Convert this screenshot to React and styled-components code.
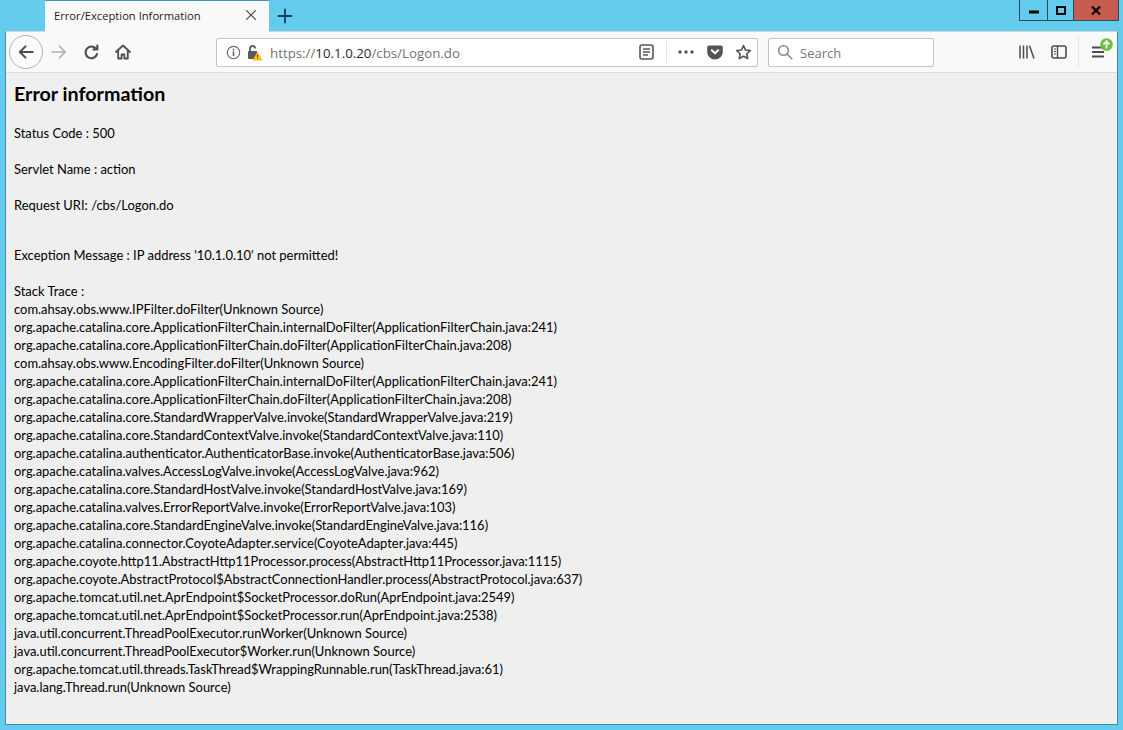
import React from 'react'
import styled, { createGlobalStyle } from 'styled-components'

const GlobalStyle = createGlobalStyle`
  html, body { margin: 0; padding: 0; background: #63cbec; }
  body { font-family: "Open Sans", "Noto Sans", sans-serif; overflow: hidden; }
`

const Desktop = styled.div`
  width: 1123px;
  height: 730px;
  background: #63cbec;
  display: flex;
  flex-direction: column;
  overflow: hidden;
`

const TitleBar = styled.div`
  height: 31px;
  display: flex;
  align-items: flex-start;
  padding-left: 45px;
  flex: none;
`

const Tab = styled.div`
  width: 224px;
  height: 32px;
  background: #f9f9fa;
  border-top: 1px solid #3d8fc4;
  box-sizing: border-box;
  display: flex;
  align-items: center;
  justify-content: space-between;
  padding: 0 11px 3px 9px;
  font-size: 11.2px;
  color: #222;
  position: relative;
  z-index: 1;
`

const NewTab = styled.div`
  width: 32px;
  height: 31px;
  display: flex;
  align-items: center;
  justify-content: center;
`

const WindowControls = styled.div`
  margin-left: auto;
  margin-right: 4px;
  display: flex;
  width: 100px;
  height: 21px;
  border: 1px solid #2d4a5a;
  border-top: none;
  box-sizing: border-box;
`

const ControlButton = styled.div`
  width: ${({ $w }) => $w}px;
  box-sizing: border-box;
  background: ${({ $close }) => ($close ? '#c75b50' : 'transparent')};
  border-left: ${({ $first }) => ($first ? 'none' : '1px solid #2d4a5a')};
  display: flex;
  align-items: center;
  justify-content: center;
`

const Frame = styled.div`
  margin: 0 5px 5px;
  flex: 1;
  min-height: 0;
  border: 1px solid #3a8db5;
  border-top: 1px solid #d6d6d6;
  display: flex;
  flex-direction: column;
  background: #efefef;
`

const Toolbar = styled.div`
  height: 40px;
  flex: none;
  background: #f9f9fa;
  border-bottom: 1px solid #dcdcdc;
  display: flex;
  align-items: center;
  padding-left: 3px;
`

const BackButton = styled.div`
  width: 34px;
  height: 34px;
  border-radius: 50%;
  border: 1px solid #b4b4b4;
  background: #fbfbfb;
  box-sizing: border-box;
  display: flex;
  align-items: center;
  justify-content: center;
  flex: none;
`

const ToolIcon = styled.div`
  width: 32px;
  height: 32px;
  display: flex;
  align-items: center;
  justify-content: center;
  flex: none;
`

const UrlBar = styled.div`
  margin-left: 77px;
  width: 542px;
  height: 29px;
  box-sizing: border-box;
  background: #fff;
  border: 1px solid #c4c4c4;
  border-radius: 2px;
  display: flex;
  align-items: center;
  padding-left: 9px;
  flex: none;
`

const LockIcon = styled.svg`
  margin-left: 6px;
  flex: none;
`

const UrlText = styled.span`
  margin-left: 7px;
  padding-top: 1px;
  font-size: 13.3px;
  color: #737373;
  white-space: nowrap;
`

const UrlHost = styled.span`
  color: #2a2a2a;
`

const UrlActions = styled.div`
  margin-left: auto;
  display: flex;
  align-items: center;
  height: 100%;
`

const UrlAction = styled.div`
  width: ${({ $w }) => $w || 28}px;
  height: 100%;
  display: flex;
  align-items: center;
  justify-content: center;
`

const UrlDivider = styled.div`
  width: 1px;
  height: 22px;
  background: #e2e2e2;
  margin: 0 4px 0 6px;
`

const SearchBar = styled.div`
  margin-left: 10px;
  width: 166px;
  height: 29px;
  box-sizing: border-box;
  background: #fff;
  border: 1px solid #c4c4c4;
  border-radius: 2px;
  display: flex;
  align-items: center;
  padding-left: 8px;
  gap: 7px;
  font-size: 13px;
  color: #777;
  flex: none;
`

const SearchLabel = styled.span`
  padding-top: 1px;
`

const RightTools = styled.div`
  margin-left: 77px;
  display: flex;
  align-items: center;
`

const RightIcon = styled.div`
  position: relative;
  width: 32px;
  height: 32px;
  display: flex;
  align-items: center;
  justify-content: center;
`

const ToolDivider = styled.div`
  width: 1px;
  height: 32px;
  background: #e4e4e4;
  margin: 0 3px 0 3px;
`

const Badge = styled.svg`
  position: absolute;
  top: 2px;
  right: 1px;
`

const Page = styled.main`
  flex: 1;
  min-height: 0;
  padding: 9px 8px 0;
  color: #000;
  font-family: Lato, "Open Sans", sans-serif;
  font-size: 12.95px;
  line-height: 18px;
  overflow: hidden;
`

const Heading = styled.h1`
  margin: 0 0 18px;
  font-size: 19.7px;
  line-height: 24px;
  font-weight: 700;
`

const Field = styled.p`
  margin: ${({ $gap }) => ($gap ? '32px' : '0')} 0 18px;
  white-space: pre;
`

const Trace = styled.div`
  white-space: pre;
`

const stack = [
  'com.ahsay.obs.www.IPFilter.doFilter(Unknown Source)',
  'org.apache.catalina.core.ApplicationFilterChain.internalDoFilter(ApplicationFilterChain.java:241)',
  'org.apache.catalina.core.ApplicationFilterChain.doFilter(ApplicationFilterChain.java:208)',
  'com.ahsay.obs.www.EncodingFilter.doFilter(Unknown Source)',
  'org.apache.catalina.core.ApplicationFilterChain.internalDoFilter(ApplicationFilterChain.java:241)',
  'org.apache.catalina.core.ApplicationFilterChain.doFilter(ApplicationFilterChain.java:208)',
  'org.apache.catalina.core.StandardWrapperValve.invoke(StandardWrapperValve.java:219)',
  'org.apache.catalina.core.StandardContextValve.invoke(StandardContextValve.java:110)',
  'org.apache.catalina.authenticator.AuthenticatorBase.invoke(AuthenticatorBase.java:506)',
  'org.apache.catalina.valves.AccessLogValve.invoke(AccessLogValve.java:962)',
  'org.apache.catalina.core.StandardHostValve.invoke(StandardHostValve.java:169)',
  'org.apache.catalina.valves.ErrorReportValve.invoke(ErrorReportValve.java:103)',
  'org.apache.catalina.core.StandardEngineValve.invoke(StandardEngineValve.java:116)',
  'org.apache.catalina.connector.CoyoteAdapter.service(CoyoteAdapter.java:445)',
  'org.apache.coyote.http11.AbstractHttp11Processor.process(AbstractHttp11Processor.java:1115)',
  'org.apache.coyote.AbstractProtocol$AbstractConnectionHandler.process(AbstractProtocol.java:637)',
  'org.apache.tomcat.util.net.AprEndpoint$SocketProcessor.doRun(AprEndpoint.java:2549)',
  'org.apache.tomcat.util.net.AprEndpoint$SocketProcessor.run(AprEndpoint.java:2538)',
  'java.util.concurrent.ThreadPoolExecutor.runWorker(Unknown Source)',
  'java.util.concurrent.ThreadPoolExecutor$Worker.run(Unknown Source)',
  'org.apache.tomcat.util.threads.TaskThread$WrappingRunnable.run(TaskThread.java:61)',
  'java.lang.Thread.run(Unknown Source)',
]

const Glyph = ({ size = 16, color = '#4d4d4d', width = 1.7, children }) => (
  <svg width={size} height={size} viewBox="0 0 16 16" fill="none" stroke={color} strokeWidth={width} strokeLinecap="round" strokeLinejoin="round">
    {children}
  </svg>
)

function App() {
  return (
    <Desktop>
      <GlobalStyle />
      <TitleBar>
        <Tab>
          <span>Error/Exception Information</span>
          <Glyph size={14} width={1.5}><path d="M3 3l10 10M13 3L3 13" /></Glyph>
        </Tab>
        <NewTab>
          <Glyph size={16} color="#123f58" width={1.8}><path d="M8 1.5v13M1.5 8h13" /></Glyph>
        </NewTab>
        <WindowControls>
          <ControlButton $first $w={27}>
            <svg width="10" height="8" viewBox="0 0 10 8"><rect x="0" y="4.5" width="10" height="3" fill="#000" /></svg>
          </ControlButton>
          <ControlButton $w={26}>
            <svg width="10" height="9" viewBox="0 0 10 9"><rect x="1" y="1" width="8" height="7" fill="none" stroke="#000" strokeWidth="2" /></svg>
          </ControlButton>
          <ControlButton $w={45} $close>
            <svg width="10" height="9" viewBox="0 0 10 9"><path d="M1 0.5l8 8M9 0.5l-8 8" stroke="#000" strokeWidth="2.2" /></svg>
          </ControlButton>
        </WindowControls>
      </TitleBar>
      <Frame>
        <Toolbar>
          <BackButton>
            <Glyph size={18} width={1.8}><path d="M14 8H2.5M7.5 3l-5 5 5 5" /></Glyph>
          </BackButton>
          <ToolIcon>
            <Glyph size={18} color="#b1b1b2" width={1.5}><path d="M2 8h11.5M8.5 3l5 5-5 5" /></Glyph>
          </ToolIcon>
          <ToolIcon>
            <Glyph size={17} width={2}><path d="M13.2 9.5A5.5 5.5 0 1 1 12 4.2M13.5 1.5v3.7H9.8" /></Glyph>
          </ToolIcon>
          <ToolIcon>
            <svg width="16" height="16" viewBox="0 0 16 16" fill="none" stroke="#4d4d4d" strokeWidth="1.8" strokeLinejoin="round" strokeLinecap="round">
              <path d="M1 8l7-6.5L15 8" />
              <path d="M3.2 7v7.5h3.4v-4h2.8v4h3.4V7" />
            </svg>
          </ToolIcon>
          <UrlBar>
            <Glyph size={15} color="#666" width={1.2}>
              <circle cx="8" cy="8" r="6.6" />
              <path d="M8 7.2v4" strokeWidth="1.7" />
              <path d="M8 4.6v.4" strokeWidth="1.8" />
            </Glyph>
            <LockIcon width="16" height="17" viewBox="0 0 16 17">
              <rect x="1" y="7" width="9" height="8" rx="1" fill="#5a5a5a" />
              <path d="M3 7V4.5a2.6 2.6 0 0 1 5.2 0" fill="none" stroke="#5a5a5a" strokeWidth="1.8" />
              <path d="M10.5 7.5l5 9h-10z" fill="#fdb81e" />
              <path d="M10.5 10.5v3M10.5 14.6v.6" stroke="#5a4500" strokeWidth="1" />
            </LockIcon>
            <UrlText>https://<UrlHost>10.1.0.20</UrlHost>/cbs/Logon.do</UrlText>
            <UrlActions>
              <UrlAction $w={28}>
                <svg width="15" height="16" viewBox="0 0 15 16" fill="none">
                  <rect x="1" y="1" width="13" height="14" rx="2" stroke="#555" strokeWidth="1.6" />
                  <path d="M4 5h7M4 8h7M4 11h5" stroke="#555" strokeWidth="1.3" />
                </svg>
              </UrlAction>
              <UrlDivider />
              <UrlAction $w={30}>
                <svg width="16" height="4" viewBox="0 0 16 4" fill="#555">
                  <circle cx="2" cy="2" r="1.7" /><circle cx="8" cy="2" r="1.7" /><circle cx="14" cy="2" r="1.7" />
                </svg>
              </UrlAction>
              <UrlAction $w={28}>
                <svg width="16" height="15" viewBox="0 0 16 15">
                  <path d="M2 0.5h12a1.8 1.8 0 0 1 1.8 1.8V7a7.8 7.6 0 0 1-15.6 0V2.3A1.8 1.8 0 0 1 2 .5z" fill="#555" />
                  <path d="M4.8 5.2L8 8.3l3.2-3.1" fill="none" stroke="#fff" strokeWidth="2" strokeLinecap="round" strokeLinejoin="round" />
                </svg>
              </UrlAction>
              <UrlAction $w={28}>
                <Glyph size={17} color="#555" width={1.5}>
                  <path d="M8 1.6l1.9 4.1 4.5.5-3.3 3 .9 4.5L8 11.5l-4 2.2.9-4.5-3.3-3 4.5-.5z" />
                </Glyph>
              </UrlAction>
            </UrlActions>
          </UrlBar>
          <SearchBar>
            <Glyph size={16} color="#8a8a8a" width={1.6}>
              <circle cx="6.5" cy="6.5" r="4.8" />
              <path d="M10 10l4.8 4.8" />
            </Glyph>
            <SearchLabel>Search</SearchLabel>
          </SearchBar>
          <RightTools>
            <RightIcon>
              <svg width="16" height="14" viewBox="0 0 16 14" fill="none" stroke="#4d4d4d" strokeWidth="1.5">
                <path d="M1 0.5v13M4.5 0.5v13M8 0.5v13M10.5 .7l4.5 12.8" />
              </svg>
            </RightIcon>
            <RightIcon>
              <svg width="16" height="14" viewBox="0 0 16 14" fill="none">
                <rect x="1" y="1" width="14" height="12" rx="2" stroke="#4d4d4d" strokeWidth="1.6" />
                <path d="M6.5 1v12" stroke="#4d4d4d" strokeWidth="1.4" />
                <path d="M3 4h2M3 6.5h2M3 9h2" stroke="#4d4d4d" strokeWidth="1" />
              </svg>
            </RightIcon>
            <ToolDivider />
            <RightIcon>
              <svg width="14" height="12" viewBox="0 0 14 12" stroke="#4d4d4d" strokeWidth="1.8">
                <path d="M1 1.5h12M1 6h12M1 10.5h12" />
              </svg>
              <Badge width="13" height="13" viewBox="0 0 13 13">
                <circle cx="6.5" cy="6.5" r="6.3" fill="#69c13e" />
                <path d="M6.5 10.5V3.5M3.5 6.3l3-3 3 3" fill="none" stroke="#fff" strokeWidth="1.7" />
              </Badge>
            </RightIcon>
          </RightTools>
        </Toolbar>
        <Page>
          <Heading>Error information</Heading>
          <Field>Status Code : 500</Field>
          <Field>Servlet Name : action</Field>
          <Field>Request URI: /cbs/Logon.do</Field>
          <Field $gap>Exception Message : IP address '10.1.0.10' not permitted!</Field>
          <Trace>
            Stack Trace :
            {stack.map((line, i) => (
              <div key={i}>{line}</div>
            ))}
          </Trace>
        </Page>
      </Frame>
    </Desktop>
  )
}

export default App
